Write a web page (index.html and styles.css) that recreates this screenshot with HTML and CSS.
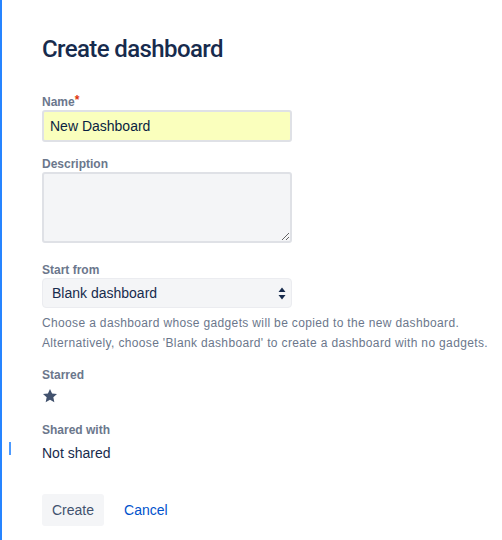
FILE: index.html
```html
<!DOCTYPE html>
<html lang="en">
<head>
    <meta charset="UTF-8">
    <title>Create dashboard</title>
    <link rel="stylesheet" href="styles.css">
</head>
<body>
    <span class="focus-mark"></span>

    <form class="dashboard-form">
        <h1>Create dashboard</h1>

        <!-- Название -->
        <div class="field">
            <label for="name">Name<span class="required">*</span></label>
            <input type="text" id="name" class="text-input autofilled" value="New Dashboard">
        </div>

        <div class="field field-area">
            <label for="description">Description</label>
            <textarea id="description" class="text-area"></textarea>
        </div>

        <div class="field">
            <label>Start from</label>
            <div class="select">
                <span>Blank dashboard</span>
                <svg width="8" height="13" viewBox="0 0 8 13">
                    <path d="M4 0.5 L7.5 5 L0.5 5 Z M4 12.5 L7.5 8 L0.5 8 Z" fill="#172b4d"/>
                </svg>
            </div>
            <p class="help">Choose a dashboard whose gadgets will be copied to the new dashboard.<br>
                Alternatively, choose 'Blank dashboard' to create a dashboard with no gadgets.</p>
        </div>

        <div class="field">
            <label>Starred</label>
            <div class="star">
                <svg width="16" height="16" viewBox="0 0 24 24">
                    <path d="M12 1.5 L15.1 8.2 L22.5 9 L17 14 L18.5 21.5 L12 17.8 L5.5 21.5 L7 14 L1.5 9 L8.9 8.2 Z" fill="#42526e"/>
                </svg>
            </div>
        </div>

        <div class="field field-shared">
            <label>Shared with</label>
            <div class="value">Not shared</div>
        </div>

        <div class="buttons">
            <button type="button" class="btn">Create</button>
            <a href="#" class="btn-link">Cancel</a>
        </div>
    </form>
</body>
</html>
```

FILE: styles.css
```css
body {
    margin: 0;
    background-color: #fff;
    border-left: 2px solid #2684ff;
    min-height: 540px;
    box-sizing: border-box;
    font-family: "Liberation Sans", Arial, sans-serif;
    color: #172b4d;
}

/* Маленькая отметка слева */
.focus-mark {
    position: absolute;
    left: 9px;
    top: 442px;
    width: 2px;
    height: 13px;
    background-color: #4c9aff;
}

.dashboard-form {
    padding: 35px 0 0 40px;
    width: 250px;
}

h1 {
    font-family: Roboto, "Liberation Sans", sans-serif;
    font-size: 24px;
    line-height: 28px;
    font-weight: 500;
    letter-spacing: -0.6px;
    margin: 0 0 29px;
    color: #172b4d;
}

.field {
    margin-top: 14px;
}

.field-area {
    padding-bottom: 5px;
}

.field-shared {
    margin-top: 15px;
}

.field label {
    display: block;
    font-size: 12px;
    line-height: 16px;
    font-weight: bold;
    color: #6b778c;
}

.required {
    color: #de350b;
    vertical-align: 2px;
}

.text-input {
    display: block;
    width: 250px;
    height: 32px;
    box-sizing: border-box;
    border: 2px solid #dfe1e6;
    border-radius: 3px;
    padding: 0 6px;
    font-family: inherit;
    font-size: 14px;
    color: #091e42;
    background-color: #f4f5f7;
    outline: none;
}

.text-input.autofilled {
    background-color: #faffbd;
}

.text-area {
    display: block;
    width: 250px;
    height: 71px;
    box-sizing: border-box;
    border: 2px solid #dfe1e6;
    border-radius: 3px;
    background-color: #f4f5f7;
    font-family: inherit;
}

.select {
    display: flex;
    justify-content: space-between;
    align-items: center;
    width: 250px;
    height: 30px;
    box-sizing: border-box;
    padding: 0 5px 0 9px;
    background-color: #f4f5f7;
    border: 1px solid #ebecf0;
    border-radius: 4px;
    font-size: 14px;
    color: #172b4d;
}

.help {
    margin: 5px 0 0;
    font-size: 12px;
    line-height: 20px;
    letter-spacing: 0.35px;
    color: #6b778c;
    width: 460px;
}

.star {
    height: 24px;
    padding-top: 5px;
    box-sizing: border-box;
}

.star svg {
    display: block;
}

.value {
    margin-top: 5px;
    font-size: 14px;
    line-height: 20px;
}

.buttons {
    display: flex;
    align-items: center;
    gap: 10px;
    margin-top: 31px;
}

.btn {
    height: 32px;
    padding: 0 10px;
    border: none;
    border-radius: 3px;
    background-color: #f4f5f7;
    color: #42526e;
    font-family: inherit;
    font-size: 14px;
}

.btn-link {
    padding: 0 10px;
    font-size: 14px;
    line-height: 32px;
    color: #0052cc;
    text-decoration: none;
}
```
